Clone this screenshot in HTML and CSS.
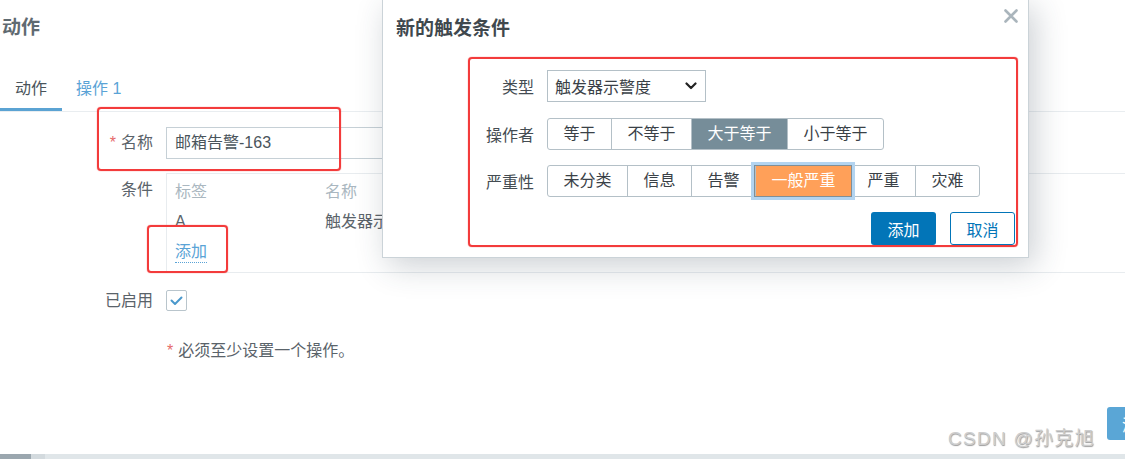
FILE: index.html
```html
<!DOCTYPE html>
<html lang="zh-CN">
<head>
<meta charset="utf-8">
<title>动作</title>
<link rel="stylesheet" href="styles.css">
</head>
<body>
<div class="screen">
  <main class="page">
    <h1 class="page-title">动作</h1>
    <nav class="tabs">
      <span class="tab active">动作</span>
      <span class="tab link-tab">操作 1</span>
    </nav>
    <div class="form">
      <div class="form-row row-name">
        <div class="label"><span class="req">*</span>名称</div>
        <div class="field"><div class="input">邮箱告警-163</div></div>
      </div>
      <div class="form-row row-cond">
        <div class="label label-top">条件</div>
        <div class="field">
          <div class="cond-table">
            <div class="cond-row head"><span class="c1">标签</span><span class="c2">名称</span></div>
            <div class="cond-row"><span class="c1">A</span><span class="c2">触发器示警度 大于等于 一般严重</span></div>
            <div class="cond-row"><span class="c1"><span class="link">添加</span></span></div>
          </div>
        </div>
      </div>
      <div class="form-row row-enabled">
        <div class="label label-small">已启用</div>
        <div class="field">
          <span class="checkbox">
            <svg width="19" height="19" viewBox="0 0 19 19"><polyline points="4.5,9.5 8,13 14.5,6.5" fill="none" stroke="#4a98cc" stroke-width="2" stroke-linecap="round" stroke-linejoin="round"/></svg>
          </span>
        </div>
      </div>
      <div class="form-row row-note">
        <div></div>
        <div class="field note"><span class="req">*</span>必须至少设置一个操作。</div>
      </div>
    </div>
    <div class="page-footer"><button class="btn-partial">添加</button></div>
  </main>
  <div class="scrollbar"><span class="thumb"></span><span class="thumb2"></span></div>

  <section class="dialog">
    <header class="dialog-head">
      <h2 class="dialog-title">新的触发条件</h2>
      <span class="close">
        <svg width="14" height="14" viewBox="0 0 14 14"><path d="M1.5 1.5 L12.5 12.5 M12.5 1.5 L1.5 12.5" stroke="#aab5bc" stroke-width="2.6" stroke-linecap="round"/></svg>
      </span>
    </header>
    <div class="dialog-body">
      <div class="d-row d-row-type">
        <div class="d-label">类型</div>
        <div class="select">
          <span>触发器示警度</span>
          <svg width="12" height="8" viewBox="0 0 12 8"><polyline points="1.5,1.5 6,6 10.5,1.5" fill="none" stroke="#222" stroke-width="2.2" stroke-linecap="round" stroke-linejoin="round"/></svg>
        </div>
      </div>
      <div class="d-row">
        <div class="d-label">操作者</div>
        <div class="seg">
          <span class="seg-btn">等于</span>
          <span class="seg-btn">不等于</span>
          <span class="seg-btn on-gray">大于等于</span>
          <span class="seg-btn">小于等于</span>
        </div>
      </div>
      <div class="d-row">
        <div class="d-label">严重性</div>
        <div class="seg">
          <span class="seg-btn">未分类</span>
          <span class="seg-btn">信息</span>
          <span class="seg-btn">告警</span>
          <span class="seg-btn on-orange">一般严重</span>
          <span class="seg-btn">严重</span>
          <span class="seg-btn">灾难</span>
        </div>
      </div>
      <div class="d-actions">
        <button class="btn btn-primary">添加</button>
        <button class="btn btn-alt">取消</button>
      </div>
    </div>
  </section>

  <div class="mark mark-name"></div>
  <div class="mark mark-add"></div>
  <div class="mark mark-dialog"></div>
  <div class="watermark">CSDN @孙克旭</div>
</div>
</body>
</html>
```
FILE: styles.css
```css
* { box-sizing: border-box; margin: 0; padding: 0; }
html, body { width: 1125px; height: 459px; overflow: hidden; background: #fff; }
body {
  font-family: "Liberation Sans", "Noto Sans CJK SC", sans-serif;
  font-size: 16px;
  color: #4a545b;
}
.screen {
  position: relative;
  width: 1125px;
  height: 459px;
  overflow: hidden;
  display: flex;
  flex-direction: column;
}
.page { flex: 1; display: flex; flex-direction: column; min-height: 0; }
.page-title {
  font-size: 19px;
  font-weight: 700;
  color: #5f6a71;
  height: 56px;
  line-height: 56px;
  padding-left: 2px;
}
.tabs {
  display: flex;
  margin-top: 14px;
  border-bottom: 1px solid #e9edf0;
}
.tab {
  height: 41px;
  line-height: 38px;
  padding: 0 14px;
  border-bottom: 3px solid transparent;
  color: #4a545b;
}
.tab.active { padding: 0 15px; border-bottom-color: #5ba3d3; }
.tab.link-tab { color: #5aa3d6; }

.form-row {
  display: grid;
  grid-template-columns: 153px 1fr;
  column-gap: 13px;
}
.row-name { margin-top: 15px; }
.row-cond { margin-top: 14px; }
.row-enabled { margin-top: 17px; }
.row-note { margin-top: 29px; }
.label { text-align: right; line-height: 32px; white-space: nowrap; color: #5a636a; }
.label-top { line-height: 34px; }
.label-small { line-height: 22px; }
.req { color: #e66a6a; margin-right: 5px; }
.field { min-width: 0; }
.input {
  width: 700px;
  height: 32px;
  line-height: 30px;
  border: 1px solid #c6d0d6;
  padding-left: 8px;
  color: #4a545b;
}
.cond-table {
  width: 980px;
  height: 100px;
  border: 1px solid #e8ecef;
  padding-top: 3px;
}
.cond-row { display: flex; height: 30px; line-height: 30px; }
.cond-row .c1 { width: 158px; padding-left: 8px; flex: none; color: #5a636a; }
.cond-row .c2 { white-space: nowrap; color: #5a636a; }
.cond-row.head span { color: #aab7c0; }
.link {
  color: #5aa3d6;
  border-bottom: 1px dotted #5aa3d6;
  line-height: 20px;
  display: inline-block;
}
.checkbox {
  display: flex;
  width: 21px;
  height: 21px;
  border: 1px solid #b9c5cc;
  border-radius: 2px;
  align-items: center;
  justify-content: center;
}
.note { line-height: 20px; padding-left: 1px; color: #5a636a; }
.note .req { margin-right: 5px; }

.page-footer {
  margin-top: auto;
  padding-bottom: 14px;
  display: flex;
  justify-content: flex-end;
}
.btn-partial {
  width: 60px;
  height: 33px;
  margin-right: -42px;
  border: none;
  border-radius: 3px;
  background: #5aa6d6;
  color: #fff;
  font: inherit;
  text-align: left;
  padding-left: 15px;
}
.scrollbar {
  height: 5px;
  background: #e0e6e9;
  display: flex;
  flex: none;
}
.thumb { width: 31px; background: #9ba7af; }
.thumb2 { width: 14px; background: #d3dade; }

/* dialog */
.dialog {
  position: absolute;
  left: 382px;
  top: -1px;
  width: 647px;
  height: 259px;
  background: #fff;
  border: 1px solid #cbd3d8;
  box-shadow: 6px 8px 30px rgba(40, 60, 75, 0.24);
}
.dialog-head {
  display: flex;
  justify-content: space-between;
  align-items: flex-start;
  padding: 0 10px 0 13px;
  height: 58px;
}
.dialog-title {
  font-size: 19px;
  font-weight: 700;
  line-height: 58px;
  color: #3f484e;
}
.close { margin-top: 9px; display: flex; }
.dialog-body { padding-top: 12px; }
.d-row {
  display: grid;
  grid-template-columns: 151px auto;
  justify-content: start;
  column-gap: 13px;
  align-items: center;
  margin-bottom: 15px;
}
.d-row-type { margin-bottom: 16px; }
.d-label { text-align: right; white-space: nowrap; color: #444c52; }
.select {
  width: 159px;
  height: 32px;
  border: 1px solid #b4c0c7;
  display: flex;
  align-items: center;
  justify-content: space-between;
  padding: 0 8px 0 7px;
  color: #3a4147;
}
.seg {
  display: flex;
  border: 1px solid #b4c0c7;
  border-radius: 3px;
  height: 32px;
}
.seg-btn {
  padding: 0 15.5px;
  line-height: 30px;
  border-left: 1px solid #b4c0c7;
  color: #3a4147;
  white-space: nowrap;
}
.seg-btn:first-child { border-left: none; border-radius: 3px 0 0 3px; }
.seg-btn:last-child { border-radius: 0 3px 3px 0; }
.on-gray { background: #768d99; color: #fff; }
.on-orange {
  background: #ffa059;
  color: #fff;
  position: relative;
  z-index: 1;
  box-shadow: 0 0 0 1px #7f8f98, 0 0 0 4px #b3d4f0;
}
.d-actions {
  display: flex;
  justify-content: flex-end;
  gap: 14px;
  padding-right: 13px;
}
.btn {
  width: 65px;
  height: 33px;
  border-radius: 3px;
  font: inherit;
  font-size: 16px;
}
.btn-primary { background: #0275b8; border: none; color: #fff; }
.btn-alt { background: #fff; border: 1px solid #0275b8; color: #0275b8; }

/* annotation marks */
.mark {
  position: absolute;
  border: 2px solid #f33b3b;
  border-radius: 4px;
  box-shadow: 0 0 1px #f33b3b;
}
.mark-name { left: 97px; top: 107px; width: 244px; height: 64px; }
.mark-add { left: 147px; top: 225px; width: 81px; height: 48px; }
.mark-dialog { left: 468px; top: 57px; width: 550px; height: 190px; }

.watermark {
  position: absolute;
  left: 948px;
  top: 427px;
  font-size: 19px;
  line-height: 24px;
  letter-spacing: 1.3px;
  color: #cdcdcd;
  text-shadow: 0.6px 0.6px 1px rgba(0, 0, 0, 0.4);
  white-space: nowrap;
}
```
